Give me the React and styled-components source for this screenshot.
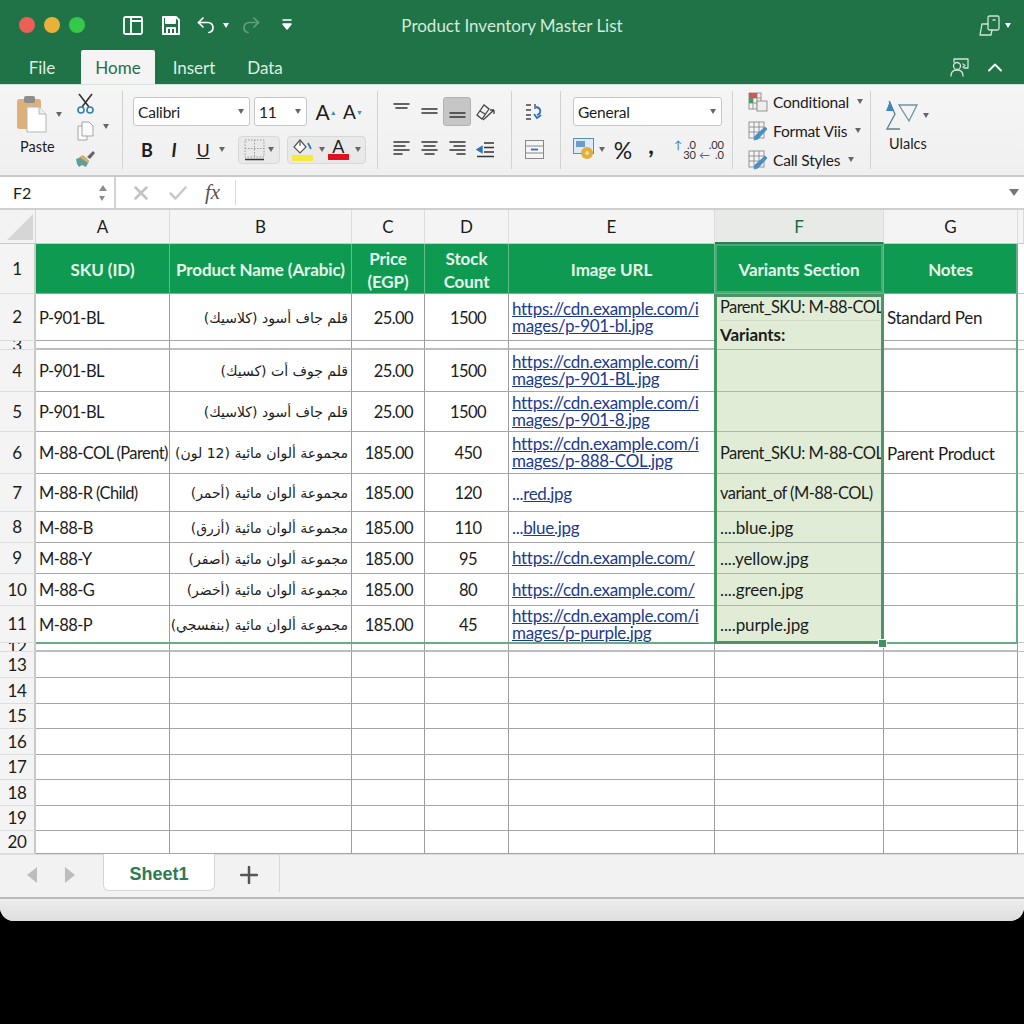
import styled, { createGlobalStyle } from 'styled-components';
import { Fragment } from 'react';

const GlobalStyle = createGlobalStyle`
  html, body {
    margin: 0;
    background: #000;
  }
  * {
    box-sizing: border-box;
  }
`;

const FONT = `Lato, "Liberation Sans", sans-serif`;
const COLS = ['A', 'B', 'C', 'D', 'E', 'F', 'G'];

const Window = styled.div`
  width: 1024px;
  height: 921px;
  display: flex;
  flex-direction: column;
  overflow: hidden;
  background: #f3f3f3;
  border-radius: 0 0 14px 14px;
  font-family: ${FONT};
  color: #1c1c1c;
`;

/* title bar */
const TitleBar = styled.div`
  height: 50px;
  display: grid;
  grid-template-columns: 1fr auto 1fr;
  align-items: center;
  background: #207346;
  color: #fff;
`;
const QuickAccess = styled.div`
  display: flex;
  align-items: center;
  padding-left: 19px;
`;
const Light = styled.span`
  width: 16px;
  height: 16px;
  border-radius: 50%;
  margin-right: 9px;
  background: ${(p) => p.$color};
`;
const QuickIcon = styled.span`
  width: ${(p) => p.$w}px;
  margin-left: ${(p) => p.$ml || 0}px;
  display: flex;
  justify-content: center;
  opacity: ${(p) => (p.$dim ? 0.3 : 1)};
`;
const Title = styled.div`
  font-size: 17px;
  color: #d4eadb;
`;
const TitleRight = styled.div`
  display: flex;
  align-items: center;
  justify-content: flex-end;
  padding-right: 13px;
`;

/* tabs */
const TabRow = styled.div`
  height: 34px;
  display: flex;
  align-items: flex-end;
  background: #207346;
`;
const Tab = styled.div`
  height: 34px;
  width: ${(p) => p.$w}px;
  padding-left: ${(p) => p.$pl || 0}px;
  display: flex;
  align-items: center;
  justify-content: center;
  font-size: 17px;
  color: ${(p) => (p.$active ? '#1f6f48' : '#dcefe3')};
  background: ${(p) => (p.$active ? '#f4f4f4' : 'transparent')};
  border-radius: 2px 2px 0 0;
`;
const TabRight = styled.div`
  margin-left: auto;
  height: 34px;
  display: flex;
  align-items: center;
  gap: 19px;
  padding-right: 22px;
`;

/* ribbon */
const Ribbon = styled.div`
  height: 93px;
  display: flex;
  background: linear-gradient(#f5f5f5, #f0f0f0);
  border-top: 1px solid #d5e5da;
  border-bottom: 2px solid #c9c9c9;
`;
const Group = styled.div`
  position: relative;
  width: ${(p) => p.$w}px;
  padding: ${(p) => p.$pt ?? 12}px 0 0 ${(p) => p.$pl ?? 0}px;
  display: flex;
  flex-direction: column;
  gap: ${(p) => p.$gap ?? 9}px;
  flex: none;
  &::after {
    content: '';
    display: ${(p) => (p.$last ? 'none' : 'block')};
    position: absolute;
    right: 0;
    top: 6px;
    bottom: 6px;
    width: 1px;
    background: #d2d2d2;
  }
`;
const RibbonRow = styled.div`
  height: 29px;
  display: flex;
  align-items: center;
`;
const Select = styled.div`
  width: ${(p) => p.$w}px;
  height: 29px;
  margin-right: ${(p) => p.$mr || 0}px;
  padding: 0 5px 0 4px;
  display: flex;
  align-items: center;
  justify-content: space-between;
  background: #fff;
  border: 1px solid #c6c6c6;
  border-radius: 3px;
  font-size: 15.5px;
  letter-spacing: -0.2px;
`;
const Caret = styled.span`
  flex: none;
  width: 0;
  height: 0;
  margin-left: ${(p) => p.$ml || 0}px;
  margin-right: ${(p) => p.$mr || 0}px;
  border-left: 3.5px solid transparent;
  border-right: 3.5px solid transparent;
  border-top: 5px solid ${(p) => p.$color || '#666'};
`;
const IconCell = styled.span`
  flex: none;
  width: ${(p) => p.$w || 28}px;
  height: 29px;
  margin-left: ${(p) => p.$ml || 0}px;
  padding-bottom: ${(p) => p.$pb || 0}px;
  display: flex;
  align-items: center;
  justify-content: center;
  font-size: ${(p) => p.$size || 18}px;
  font-weight: ${(p) => p.$weight || 400};
  font-style: ${(p) => p.$slant || 'normal'};
  text-decoration: ${(p) => p.$line || 'none'};
  background: ${(p) => (p.$pressed ? '#c6c6c6' : 'transparent')};
  border: ${(p) => (p.$pressed ? '1px solid #b2b2b2' : 'none')};
  border-radius: 3px;
`;
const TinyArrow = styled.sup`
  font-size: 7px;
  color: #3a8bb8;
`;
const ToolBox = styled.div`
  height: 28px;
  width: ${(p) => p.$w}px;
  margin-left: ${(p) => p.$ml}px;
  display: flex;
  align-items: center;
  justify-content: space-around;
  padding: 0 3px;
  background: #e9e9e9;
  border: 1px solid #d8d8d8;
  border-radius: 4px;
`;
const ColorPick = styled.span`
  display: flex;
  align-items: center;
  gap: 6px;
`;
const LetterA = styled.span`
  display: flex;
  flex-direction: column;
  align-items: center;
  font-size: 18px;
  line-height: 15px;
  width: 21px;
`;
const Swatch = styled.span`
  width: 21px;
  height: 6px;
  background: ${(p) => p.$color};
`;
const ClipboardWrap = styled.div`
  display: flex;
  height: 100%;
`;
const PasteCol = styled.div`
  width: 74px;
  padding-left: 17px;
  display: flex;
  flex-direction: column;
`;
const PasteTop = styled.div`
  height: 38px;
  display: flex;
  align-items: center;
  gap: 9px;
  margin-bottom: 5px;
`;
const PasteLabel = styled.div`
  font-size: 14.5px;
  margin-left: 3px;
`;
const SmallCol = styled.div`
  width: 22px;
  display: flex;
  flex-direction: column;
  align-items: center;
  gap: 8px;
  margin-top: -2px;
`;
const SmallRow = styled.div`
  position: relative;
  height: 20px;
  display: flex;
  align-items: center;
`;
const SmallCaret = styled.span`
  position: absolute;
  left: 26px;
  top: 8px;
`;
const StyleRow = styled.div`
  height: 29px;
  display: flex;
  align-items: center;
  gap: 5px;
  font-size: 15.5px;
  letter-spacing: -0.2px;
  white-space: nowrap;
`;
const StackNum = styled.span`
  display: grid;
  grid-template-columns: 12px 14px;
  font-size: 11px;
  line-height: 10px;
  color: #333;
  align-items: center;
  justify-items: end;
`;
const BlueMark = styled.span`
  color: #2f72b8;
`;
const EditTop = styled.div`
  height: 32px;
  display: flex;
  align-items: center;
  gap: 4px;
  margin-bottom: 4px;
`;
const EditLabel = styled.div`
  font-size: 14.5px;
  margin-left: 3px;
`;

/* formula bar */
const FormulaBar = styled.div`
  height: 33px;
  display: flex;
  align-items: center;
  background: #fff;
  border-bottom: 2px solid #cfcfcf;
`;
const NameBox = styled.div`
  width: 116px;
  height: 100%;
  padding: 0 6px 0 13px;
  display: flex;
  align-items: center;
  justify-content: space-between;
  font-size: 16px;
  border-right: 2px solid #d2d2d2;
`;
const Spinner = styled.span`
  display: flex;
  flex-direction: column;
  gap: 5px;
  margin-right: 1px;
`;
const UpCaret = styled(Caret)`
  border-top: 0;
  border-bottom: 6px solid #8c8c8c;
  border-left-width: 4px;
  border-right-width: 4px;
`;
const FormulaIcon = styled.span`
  width: ${(p) => p.$w}px;
  margin-left: ${(p) => p.$ml || 0}px;
  display: flex;
  justify-content: center;
`;
const FxLabel = styled.span`
  width: 38px;
  text-align: center;
  font-family: 'Liberation Serif', serif;
  font-style: italic;
  font-size: 21px;
  color: #555;
  border-right: 1px solid #d9d9d9;
  padding-right: 8px;
`;
const FormulaEnd = styled.span`
  margin-left: auto;
  margin-right: 5px;
`;
const BigCaret = styled(Caret)`
  display: block;
  border-top-width: 7px;
  border-left-width: 5px;
  border-right-width: 5px;
`;

/* sheet */
const Sheet = styled.div`
  position: relative;
  height: 644px;
  flex: none;
  display: grid;
  grid-template-columns: 36px 134px 182px 73px 84px 206px 169px 134px 6px;
  grid-template-rows: 34px 50px 47px 9px 42px 40px 42px 38px 31px 31px 32px 37px 9px 26px 26px 25px 26px 25px 26px 25px 23px;
  background: #fff;
  overflow: hidden;
`;
const Corner = styled.div`
  background: #f3f3f3;
  border-right: 1px solid #d5d5d5;
  border-bottom: 1px solid #c8c8c8;
  display: flex;
  align-items: flex-end;
  justify-content: flex-end;
  padding: 0 2px 3px 0;
`;
const ColHead = styled.div`
  display: flex;
  align-items: center;
  justify-content: center;
  font-size: 17px;
  background: ${(p) => (p.$active ? '#e8eae8' : '#f4f4f4')};
  color: ${(p) => (p.$active ? '#1d6a44' : '#1c1c1c')};
  border-right: 1px solid #dcdcdc;
  border-bottom: ${(p) => (p.$active ? '2px solid #2f7d55' : '1px solid #c8c8c8')};
`;
const RowHead = styled.div`
  display: flex;
  align-items: center;
  justify-content: center;
  overflow: hidden;
  font-size: 17px;
  line-height: 18px;
  letter-spacing: -0.3px;
  background: #f4f4f4;
  border-right: 2px solid #c9c9c9;
  border-bottom: 1px solid #dedede;
`;
const Cell = styled.div`
  min-width: 0;
  display: flex;
  align-items: center;
  overflow: hidden;
  white-space: nowrap;
  font-size: ${(p) => (p.$tight ? 16.5 : 17)}px;
  letter-spacing: ${(p) => (p.$tight ? -0.6 : -0.3)}px;
  padding: 1px ${(p) => p.$pr ?? 0}px 0 3px;
  justify-content: ${(p) => p.$justify || 'flex-start'};
  background: #fff;
  border-right: 1px solid #9d9d9d;
  border-bottom: ${(p) => (p.$thick ? '2px solid #bdbdbd' : '1px solid #a6a6a6')};
`;
const HeadCell = styled.div`
  display: flex;
  align-items: center;
  justify-content: center;
  text-align: center;
  padding-top: 2px;
  font-size: 17px;
  line-height: 23px;
  font-weight: 700;
  letter-spacing: -0.1px;
  color: #e6f6ea;
  background: #0e9a50;
  border-right: 1px solid #63bb8c;
  border-bottom: 1px solid #63bb8c;
  box-shadow: ${(p) => (p.$active ? 'inset 0 0 0 2px #4fa677' : 'none')};
`;
const Arabic = styled.span`
  font-family: 'DejaVu Sans', sans-serif;
  font-size: 14px;
  letter-spacing: 0;
`;
const Links = styled.div`
  line-height: 17px;
  margin-top: -2px;
`;
const LinkLine = styled.span`
  display: block;
  color: #1c3a90;
  text-decoration: underline;
`;
const LinkTail = styled.span`
  color: #1c3a90;
  text-decoration: underline;
`;
const Dots = styled.span`
  color: #1c3a90;
`;
const VariantCell = styled.div`
  min-width: 0;
  grid-row: span ${(p) => p.$span || 1};
  display: flex;
  flex-direction: column;
  justify-content: center;
  overflow: hidden;
  white-space: nowrap;
  font-size: 17px;
  letter-spacing: -0.1px;
  padding: 0 0 0 5px;
  background: #e0ecd6;
  border-bottom: 1px solid #a9bba6;
`;
const LongText = styled.span`
  font-size: 16.5px;
  letter-spacing: -0.55px;
`;
const VariantLine = styled.div`
  height: ${(p) => p.$h}px;
  margin-right: 4px;
  display: flex;
  align-items: center;
  font-weight: ${(p) => (p.$bold ? 700 : 400)};
  border-bottom: ${(p) => (p.$rule ? '1px solid #d2ddca' : 'none')};
`;
const Filler = styled.div`
  border-bottom: 1px solid #c3c3c3;
`;
const TableOutline = styled.div`
  position: absolute;
  left: 36px;
  top: 34px;
  width: 982px;
  height: 400px;
  border-right: 2px solid #68ab85;
  border-bottom: 2px solid #68ab85;
  pointer-events: none;
`;
const Selection = styled.div`
  position: absolute;
  left: 714px;
  top: 84px;
  width: 170px;
  height: 350px;
  border: 3px solid #4b9567;
  pointer-events: none;
`;
const FillHandle = styled.div`
  position: absolute;
  left: 878px;
  top: 429px;
  width: 9px;
  height: 9px;
  background: #3f9162;
  border: 1px solid #fff;
`;

/* bottom */
const SheetTabs = styled.div`
  height: 43px;
  flex: none;
  display: flex;
  align-items: flex-start;
  background: #f2f2f2;
  border-top: 1px solid #dcdcdc;
`;
const TabArrows = styled.div`
  width: 103px;
  height: 43px;
  display: flex;
  align-items: center;
  gap: 26px;
  padding: 0 0 3px 27px;
`;
const SheetTab = styled.div`
  width: 112px;
  height: 37px;
  margin-top: -1px;
  padding-top: 5px;
  display: flex;
  align-items: center;
  justify-content: center;
  font-family: 'Liberation Sans', sans-serif;
  font-size: 18px;
  font-weight: 700;
  color: #2f7a52;
  background: #fff;
  border: 1px solid #d5d5d5;
  border-top: 0;
  border-radius: 0 0 6px 6px;
`;
const AddSheet = styled.div`
  width: 65px;
  height: 37px;
  padding: 3px 0 0 3px;
  display: flex;
  align-items: center;
  justify-content: center;
  border-right: 1px solid #d8d8d8;
`;
const StatusBar = styled.div`
  flex: 1;
  background: linear-gradient(#ededed, #dedede);
  border-top: 2px solid #b9b9b9;
`;

/* drawings */
const Svg = ({ w, h = w, children, color = 'currentColor', sw = 1.6 }) => (
  <svg width={w} height={h} viewBox={`0 0 ${w} ${h}`} fill="none" stroke={color} strokeWidth={sw} strokeLinecap="round" strokeLinejoin="round">
    {children}
  </svg>
);

const SidebarIcon = () => (
  <Svg w={20} h={19} sw={1.8}>
    <rect x="1" y="1" width="18" height="17" rx="1.5" />
    <path d="M8 1v17M8 5h11" />
  </Svg>
);
const SaveIcon = () => (
  <Svg w={18} h={19} sw={2}>
    <path d="M1 1h13l3 3v14H1z" />
    <path d="M4 1v6h9V1" fill="currentColor" />
    <path d="M5 18v-6h8v6M9 13v4" />
  </Svg>
);
const FlipSvg = styled.svg`
  transform: ${(p) => (p.$flip ? 'scaleX(-1)' : 'none')};
`;
const UndoIcon = ({ flip }) => (
  <FlipSvg $flip={flip} width="18" height="17" viewBox="0 0 18 17" fill="none" stroke="currentColor" strokeWidth="1.7" strokeLinecap="round" strokeLinejoin="round">
    <path d="M6 1 1.5 5.5 6 10" />
    <path d="M1.5 5.5H11a5 5 0 0 1 5 5c0 2.5-1.5 4.5-4 5" />
  </FlipSvg>
);
const CustomizeIcon = () => (
  <Svg w={10} h={12} sw={1.5}>
    <path d="M1 1h8" />
    <path d="M1 5h8L5 10z" fill="currentColor" />
  </Svg>
);
const ShareIcon = () => (
  <Svg w={24} h={21} color="#cfe6d8" sw={1.3}>
    <rect x="9" y="1" width="11" height="14" rx="1.5" />
    <path d="M9 9H3L1 20h11l1-5" />
    <path d="M14 5h2" />
  </Svg>
);
const PersonIcon = () => (
  <Svg w={19} h={19} color="#cfe6d8" sw={1.3}>
    <path d="M4 4V1h14v9h-4" />
    <circle cx="7" cy="8" r="3.5" />
    <path d="M1 18c0-4 2.5-6 6-6s6 2 6 6" />
    <path d="M13 6l2 1.5-2 1.5" />
  </Svg>
);
const ChevronUp = () => (
  <Svg w={14} h={9} color="#eef7f1" sw={2}>
    <path d="M1 7.5 7 1.5l6 6" />
  </Svg>
);
const PasteIcon = () => (
  <svg width="30" height="38" viewBox="0 0 30 38">
    <rect x="0" y="4" width="24" height="30" rx="2.5" fill="#dcb27a" />
    <rect x="7" y="1" width="11" height="7" rx="2" fill="#8d8d8d" />
    <path d="M10 12h12l7 7v18H10z" fill="#fff" stroke="#b5b5b5" />
    <path d="M22 12v7h7" fill="#eee" stroke="#b5b5b5" />
  </svg>
);
const CutIcon = () => (
  <svg width="19" height="21" viewBox="0 0 19 21" fill="none" strokeWidth="1.6">
    <path d="M3 1l10 13M16 1 6 14" stroke="#333" />
    <circle cx="5" cy="17" r="3" stroke="#2f7fae" />
    <circle cx="14" cy="17" r="3" stroke="#2f7fae" />
  </svg>
);
const CopyIcon = () => (
  <svg width="17" height="20" viewBox="0 0 17 20" fill="#fbfbfb" stroke="#a5a5a5" strokeWidth="1">
    <path d="M1 5h9v14H1z" />
    <path d="M5 1h7l4 4v10H5z" />
  </svg>
);
const BrushIcon = () => (
  <svg width="21" height="18" viewBox="0 0 21 18">
    <path d="M1 9 9 6l5 5-3 6-4-2-3 2-2-3z" fill="#5f9f96" />
    <path d="M4 7l4-2 6 6-1 2z" fill="#d9ad6a" />
    <path d="M12 7l6-6 2 2-5 6z" fill="#666" />
  </svg>
);
const LinesIcon = ({ rows, color = '#333' }) => (
  <Svg w={17} h={19} sw={1.5} color={color}>
    {rows.map(([y, x1, x2]) => (
      <path key={y} d={`M${x1} ${y}H${x2}`} />
    ))}
  </Svg>
);
const OrientIcon = () => (
  <svg width="20" height="20" viewBox="0 0 20 20" fill="none" stroke="#444" strokeWidth="1.3">
    <path d="M2 13 9 3l5 4-7 10zM5 9l5 3" />
    <path d="M8 18 19 8M19 8h-4M19 8v4" />
  </svg>
);
const IndentIcon = () => (
  <svg width="18" height="16" viewBox="0 0 18 16" fill="none" stroke="#333" strokeWidth="1.4">
    <path d="M8 1h10M8 5.5h10M8 10h10M1 14.5h17" />
    <path d="M1 7.5l5-3v6z" fill="#2f72b8" stroke="#2f72b8" />
  </svg>
);
const BordersIcon = () => (
  <svg width="21" height="22" viewBox="0 0 21 22" fill="none" stroke="#9a9a9a" strokeDasharray="1.5 1.5">
    <rect x="1" y="1" width="19" height="17" />
    <path d="M10.5 1v17M1 9.5h19" />
    <path d="M1 20.5h19" stroke="#333" strokeWidth="1.5" strokeDasharray="none" />
  </svg>
);
const BucketIcon = () => (
  <svg width="21" height="16" viewBox="0 0 21 16" fill="none" stroke="#555" strokeWidth="1.2">
    <path d="M8 1 2 8l6 6 6-6z" fill="#fff" />
    <path d="M8 1v6" />
    <path d="M16 4l3 6" stroke="#2f7fae" strokeWidth="1.8" />
  </svg>
);
const WrapIcon = () => (
  <svg width="18" height="18" viewBox="0 0 18 18" fill="none" stroke="#444" strokeWidth="1.3">
    <path d="M1 2h5M1 7h5M1 12h5M1 16h5" />
    <path d="M10 1v5" />
    <path d="M11 4c5 1 6 6 1 8" stroke="#2f72b8" strokeWidth="1.8" />
    <path d="M9 11l3 4 4-3" stroke="#2f72b8" strokeWidth="1.8" />
  </svg>
);
const MergeIcon = () => (
  <svg width="19" height="19" viewBox="0 0 19 19" fill="#f5f5f5" stroke="#888" strokeWidth="1">
    <rect x="0.5" y="0.5" width="18" height="18" />
    <path d="M1 6h17M1 13h17" />
    <path d="M6 9.5h7" stroke="#2f72b8" strokeWidth="1.8" />
  </svg>
);
const CurrencyIcon = () => (
  <svg width="22" height="23" viewBox="0 0 22 23">
    <rect x="0.5" y="0.5" width="20" height="15" fill="#dcebf7" stroke="#5b8db5" />
    <rect x="3" y="3" width="9" height="6" fill="#6a9cc7" />
    <circle cx="14" cy="15" r="6" fill="#e3ad3b" />
    <circle cx="14" cy="15" r="2" fill="#f6dc9a" />
  </svg>
);
const CondIcon = () => (
  <svg width="20" height="20" viewBox="0 0 20 20" fill="#f3f3f3" stroke="#8a8a8a" strokeWidth="0.9">
    <rect x="1" y="1" width="12" height="16" />
    <path d="M1 6h12M1 11h12M5 1v16M9 1v16" />
    <rect x="1" y="1" width="8" height="5" fill="#d9534f" stroke="none" />
    <rect x="1" y="6" width="4" height="5" fill="#4a9a68" stroke="none" />
    <rect x="9" y="9" width="10" height="10" fill="#eee" />
  </svg>
);
const TableBrushIcon = () => (
  <svg width="20" height="20" viewBox="0 0 20 20" fill="#f5f5f5" stroke="#8a8a8a" strokeWidth="0.9">
    <rect x="1" y="1" width="15" height="16" />
    <path d="M1 6h15M1 11h15M6 1v16M11 1v11" />
    <path d="M17 6l2 2-9 10-4 1 1-4z" fill="#4a8fc4" stroke="#4a8fc4" />
  </svg>
);
const SortFilterIcon = () => (
  <svg width="33" height="30" viewBox="0 0 33 30" fill="none" stroke="#5c7f8f" strokeWidth="1.3">
    <path d="M3 1l6 13-8 15h13" />
    <path d="M0 11 4 1l4 10z" fill="#3f86c0" stroke="none" />
    <path d="M13 5h18l-8 16z" stroke="#6f929d" />
  </svg>
);
const CrossIcon = () => (
  <Svg w={14} h={14} color="#c2c2c2" sw={2.5}>
    <path d="M1.5 1.5l11 11M12.5 1.5l-11 11" />
  </Svg>
);
const CheckIcon = () => (
  <Svg w={18} h={14} color="#c8c8c8" sw={2.5}>
    <path d="M1.5 7.5 6.5 12.5 16.5 1.5" />
  </Svg>
);
const CornerMark = () => (
  <svg width="26" height="26" viewBox="0 0 26 26">
    <path d="M26 0v26H0z" fill="#d6d6d6" />
  </svg>
);
const NavArrow = ({ flip }) => (
  <FlipSvg $flip={flip} width="11" height="16" viewBox="0 0 11 16">
    <path d="M10 0v16L0 8z" fill="#bdbdbd" />
  </FlipSvg>
);
const PlusIcon = () => (
  <Svg w={18} h={18} color="#555" sw={2.5}>
    <path d="M9 1v16M1 9h16" />
  </Svg>
);

const INK = [
  'قلم جاف أسود (كلاسيك)',
  'قلم جوف أت (كسيك)',
  'مجموعة ألوان مائية (12 لون)',
  'مجموعة ألوان مائية (أحمر)',
  'مجموعة ألوان مائية (أزرق)',
  'مجموعة ألوان مائية (أصفر)',
  'مجموعة ألوان مائية (أخضر)',
  'مجموعة ألوان مائية (بنفسجي)',
];

const ROWS = [
  { n: 2, sku: 'P-901-BL', name: INK[0], price: '25.00', stock: '1500', url: ['https://cdn.example.com/i', 'mages/p-901-bl.jpg'], span: 2, notes: 'Standard Pen', variant: 'head' },
  { n: 3, spacer: true },
  { n: 4, sku: 'P-901-BL', name: INK[1], price: '25.00', stock: '1500', url: ['https://cdn.example.com/i', 'mages/p-901-BL.jpg'] },
  { n: 5, sku: 'P-901-BL', name: INK[0], price: '25.00', stock: '1500', url: ['https://cdn.example.com/i', 'mages/p-901-8.jpg'] },
  { n: 6, sku: 'M-88-COL (Parent)', name: INK[2], price: '185.00', stock: '450', url: ['https://cdn.example.com/i', 'mages/p-888-COL.jpg'], longVariant: 'Parent_SKU: M-88-COL', notes: 'Parent Product' },
  { n: 7, sku: 'M-88-R (Child)', name: INK[3], price: '185.00', stock: '120', short: 'red.jpg', longVariant: 'variant_of (M-88-COL)' },
  { n: 8, sku: 'M-88-B', name: INK[4], price: '185.00', stock: '110', short: 'blue.jpg', variant: '....blue.jpg' },
  { n: 9, sku: 'M-88-Y', name: INK[5], price: '185.00', stock: '95', url: ['https://cdn.example.com/'], variant: '....yellow.jpg' },
  { n: 10, sku: 'M-88-G', name: INK[6], price: '185.00', stock: '80', url: ['https://cdn.example.com/'], variant: '....green.jpg' },
  { n: 11, sku: 'M-88-P', name: INK[7], price: '185.00', stock: '45', url: ['https://cdn.example.com/i', 'mages/p-purple.jpg'], variant: '....purple.jpg' },
];

const DataRow = ({ row }) => {
  if (row.spacer) {
    return (
      <>
        <RowHead>{row.n}</RowHead>
        <Cell $thick />
        <Cell $thick />
        <Cell $thick />
        <Cell $thick />
        <Cell $thick />
        <Cell $thick />
        <Filler />
      </>
    );
  }
  return (
    <>
      <RowHead>{row.n}</RowHead>
      <Cell $tight>{row.sku}</Cell>
      <Cell $justify="flex-end" $pr={3}>
        <Arabic dir="rtl">{row.name}</Arabic>
      </Cell>
      <Cell $justify="flex-end" $tight $pr={11}>
        {row.price}
      </Cell>
      <Cell $justify="center" $tight>
        {row.stock}
      </Cell>
      <Cell>
        {row.short ? (
          <span>
            <Dots>...</Dots>
            <LinkTail>{row.short}</LinkTail>
          </span>
        ) : (
          <Links>
            {row.url.map((line) => (
              <LinkLine key={line}>{line}</LinkLine>
            ))}
          </Links>
        )}
      </Cell>
      <VariantCell $span={row.span}>
        {row.variant === 'head' ? (
          <>
            <VariantLine $h={26} $rule>
              <LongText>Parent_SKU: M-88-COL</LongText>
            </VariantLine>
            <VariantLine $h={28} $bold>
              Variants:
            </VariantLine>
          </>
        ) : (
          row.variant || (row.longVariant && <LongText>{row.longVariant}</LongText>)
        )}
      </VariantCell>
      <Cell>{row.notes}</Cell>
      <Filler />
    </>
  );
};

const App = () => {
  const blanks = Array.from({ length: 9 }, (_, i) => i + 12);
  return (
    <>
      <GlobalStyle />
      <Window>
        <TitleBar>
          <QuickAccess>
            <Light $color="#ec5f57" />
            <Light $color="#e9b13a" />
            <Light $color="#35c84a" />
            <QuickIcon $w={20} $ml={29}>
              <SidebarIcon />
            </QuickIcon>
            <QuickIcon $w={18} $ml={19}>
              <SaveIcon />
            </QuickIcon>
            <QuickIcon $w={18} $ml={17}>
              <UndoIcon />
            </QuickIcon>
            <Caret $color="#fff" $ml={8} />
            <QuickIcon $w={18} $ml={13} $dim>
              <UndoIcon flip />
            </QuickIcon>
            <QuickIcon $w={10} $ml={22}>
              <CustomizeIcon />
            </QuickIcon>
          </QuickAccess>
          <Title>Product Inventory Master List</Title>
          <TitleRight>
            <ShareIcon />
            <Caret $color="#fff" $ml={2} />
          </TitleRight>
        </TitleBar>

        <TabRow>
          <Tab $w={81} $pl={3}>
            File
          </Tab>
          <Tab $w={74} $active>
            Home
          </Tab>
          <Tab $w={78}>Insert</Tab>
          <Tab $w={64}>Data</Tab>
          <TabRight>
            <PersonIcon />
            <ChevronUp />
          </TabRight>
        </TabRow>

        <Ribbon>
          <Group $w={123} $pt={10}>
            <ClipboardWrap>
              <PasteCol>
                <PasteTop>
                  <PasteIcon />
                  <Caret $mr={-10} />
                </PasteTop>
                <PasteLabel>Paste</PasteLabel>
              </PasteCol>
              <SmallCol>
                <SmallRow>
                  <CutIcon />
                </SmallRow>
                <SmallRow>
                  <CopyIcon />
                  <SmallCaret>
                    <Caret />
                  </SmallCaret>
                </SmallRow>
                <SmallRow>
                  <BrushIcon />
                </SmallRow>
              </SmallCol>
            </ClipboardWrap>
          </Group>

          <Group $w={255} $pl={10}>
            <RibbonRow>
              <Select $w={117} $mr={4}>
                Calibri
                <Caret />
              </Select>
              <Select $w={53} $mr={6}>
                11
                <Caret />
              </Select>
              <IconCell $w={26} $size={21}>
                A<TinyArrow>▲</TinyArrow>
              </IconCell>
              <IconCell $w={28} $size={19}>
                A<TinyArrow>▼</TinyArrow>
              </IconCell>
            </RibbonRow>
            <RibbonRow>
              <IconCell $w={28} $weight={700}>
                B
              </IconCell>
              <IconCell $w={26} $slant="italic" $weight={700}>
                I
              </IconCell>
              <IconCell $w={32} $line="underline">
                U
              </IconCell>
              <Caret />
              <ToolBox $w={42} $ml={13}>
                <BordersIcon />
                <Caret />
              </ToolBox>
              <ToolBox $w={79} $ml={7}>
                <ColorPick>
                  <LetterA>
                    <BucketIcon />
                    <Swatch $color="#f5ea3b" />
                  </LetterA>
                  <Caret />
                </ColorPick>
                <ColorPick>
                  <LetterA>
                    A
                    <Swatch $color="#e0101c" />
                  </LetterA>
                  <Caret />
                </ColorPick>
              </ToolBox>
            </RibbonRow>
          </Group>

          <Group $w={134} $pl={9}>
            <RibbonRow>
              <IconCell>
                <LinesIcon rows={[[2, 1, 16], [6, 3, 14]]} />
              </IconCell>
              <IconCell>
                <LinesIcon rows={[[7, 1, 16], [11, 1, 16]]} />
              </IconCell>
              <IconCell $pressed>
                <LinesIcon rows={[[11, 1, 16], [15, 1, 16]]} />
              </IconCell>
              <IconCell>
                <OrientIcon />
              </IconCell>
            </RibbonRow>
            <RibbonRow>
              <IconCell>
                <LinesIcon rows={[[2, 1, 16], [6, 1, 12], [10, 1, 16], [14, 1, 9]]} />
              </IconCell>
              <IconCell>
                <LinesIcon rows={[[2, 1, 16], [6, 3, 14], [10, 1, 16], [14, 4, 13]]} />
              </IconCell>
              <IconCell>
                <LinesIcon rows={[[2, 1, 16], [6, 5, 16], [10, 1, 16], [14, 8, 16]]} />
              </IconCell>
              <IconCell>
                <IndentIcon />
              </IconCell>
            </RibbonRow>
          </Group>

          <Group $w={49} $pl={10}>
            <RibbonRow>
              <IconCell $w={24}>
                <WrapIcon />
              </IconCell>
            </RibbonRow>
            <RibbonRow>
              <IconCell $w={24}>
                <MergeIcon />
              </IconCell>
            </RibbonRow>
          </Group>

          <Group $w={172} $pl={12}>
            <RibbonRow>
              <Select $w={149}>
                General
                <Caret />
              </Select>
            </RibbonRow>
            <RibbonRow>
              <IconCell $w={22}>
                <CurrencyIcon />
              </IconCell>
              <IconCell $w={14}>
                <Caret />
              </IconCell>
              <IconCell $size={23}>%</IconCell>
              <IconCell $size={24} $weight={700} $pb={10}>
                ,
              </IconCell>
              <IconCell $ml={4}>
                <StackNum>
                  <BlueMark>↑</BlueMark>
                  <span>.0</span>
                  <span />
                  <span>30</span>
                </StackNum>
              </IconCell>
              <IconCell>
                <StackNum>
                  <span />
                  <span>.00</span>
                  <BlueMark>←</BlueMark>
                  <span>.0</span>
                </StackNum>
              </IconCell>
            </RibbonRow>
          </Group>

          <Group $w={138} $pl={15} $pt={2} $gap={0}>
            <StyleRow>
              <CondIcon />
              Conditional
              <Caret $ml={3} />
            </StyleRow>
            <StyleRow>
              <TableBrushIcon />
              Format Viis
              <Caret $ml={3} />
            </StyleRow>
            <StyleRow>
              <TableBrushIcon />
              Call Styles
              <Caret $ml={3} />
            </StyleRow>
          </Group>

          <Group $w={153} $pl={15} $pt={14} $gap={0} $last>
            <EditTop>
              <SortFilterIcon />
              <Caret />
            </EditTop>
            <EditLabel>Ulalcs</EditLabel>
          </Group>
        </Ribbon>

        <FormulaBar>
          <NameBox>
            F2
            <Spinner>
              <UpCaret />
              <Caret $color="#8c8c8c" />
            </Spinner>
          </NameBox>
          <FormulaIcon $w={18} $ml={16}>
            <CrossIcon />
          </FormulaIcon>
          <FormulaIcon $w={18} $ml={19}>
            <CheckIcon />
          </FormulaIcon>
          <FormulaIcon $w={38} $ml={11}>
            <FxLabel>fx</FxLabel>
          </FormulaIcon>
          <FormulaEnd>
            <BigCaret $color="#777" />
          </FormulaEnd>
        </FormulaBar>

        <Sheet>
          <Corner>
            <CornerMark />
          </Corner>
          {COLS.map((c) => (
            <ColHead key={c} $active={c === 'F'}>
              {c}
            </ColHead>
          ))}
          <ColHead />

          <RowHead>1</RowHead>
          <HeadCell>SKU (ID)</HeadCell>
          <HeadCell>Product Name (Arabic)</HeadCell>
          <HeadCell>
            Price
            <br />
            (EGP)
          </HeadCell>
          <HeadCell>
            Stock
            <br />
            Count
          </HeadCell>
          <HeadCell>Image URL</HeadCell>
          <HeadCell $active>Variants Section</HeadCell>
          <HeadCell>Notes</HeadCell>
          <Filler />

          {ROWS.map((row) => (
            <DataRow key={row.n} row={row} />
          ))}

          {blanks.map((n) => (
            <Fragment key={n}>
              <RowHead>{n}</RowHead>
              {COLS.map((c) => (
                <Cell key={c} $thick={n === 12} />
              ))}
              <Filler />
            </Fragment>
          ))}

          <TableOutline />
          <Selection />
          <FillHandle />
        </Sheet>

        <SheetTabs>
          <TabArrows>
            <NavArrow />
            <NavArrow flip />
          </TabArrows>
          <SheetTab>Sheet1</SheetTab>
          <AddSheet>
            <PlusIcon />
          </AddSheet>
        </SheetTabs>
        <StatusBar />
      </Window>
    </>
  );
};

export default App;
